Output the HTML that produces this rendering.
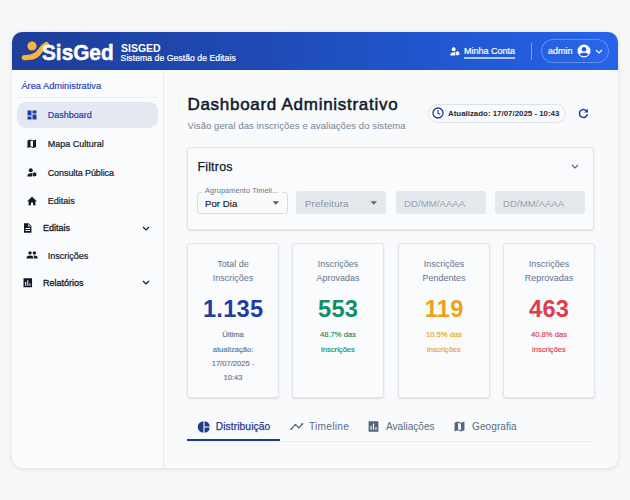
<!DOCTYPE html>
<html lang="pt-BR">
<head>
<meta charset="utf-8">
<title>SISGED - Dashboard Administrativo</title>
<style>
*{box-sizing:border-box;margin:0;padding:0}
html,body{width:630px;height:500px;overflow:hidden}
body{background:#f7f7f7;font-family:"Liberation Sans","DejaVu Sans",sans-serif;position:relative;color:#111827}
.abs{position:absolute}
#app{position:absolute;left:12px;top:32px;width:606px;height:436px;border-radius:10px;background:#f8fafc;overflow:hidden;box-shadow:0 1px 4px rgba(0,0,0,.10),0 0 1px rgba(0,0,0,.10)}
#hdr{position:absolute;left:0;top:0;width:606px;height:38px;background:linear-gradient(90deg,#1e3e9a 0%,#1f49b3 38%,#2156cf 70%,#2563eb 100%)}
#side{position:absolute;left:0;top:38px;width:152px;height:398px;background:#f9fbfd;border-right:1px solid #e9eef4}
#main{position:absolute;left:152px;top:38px;width:454px;height:398px;background:#f8fafc}
.t{position:absolute;white-space:nowrap;line-height:1}
.nav{font-size:9px;color:#111827;-webkit-text-stroke:.2px #111827}
svg{position:absolute;overflow:visible}
.card{position:absolute;background:#fafbfd;border:1px solid #e1e5ea;border-radius:3px;box-shadow:0 1px 2px rgba(0,0,0,.12)}
.lbl{font-size:9px;color:#64748b;text-align:center;line-height:14px;white-space:normal}
.num{font-size:23.6px;font-weight:bold;text-align:center;letter-spacing:.3px;text-indent:.3px}
.sub{font-size:7.6px;text-align:center;line-height:14.2px;white-space:normal;-webkit-text-stroke:.15px currentColor}
</style>
</head>
<body>
<div id="app">
  <div id="hdr"></div>
  <div id="side"></div>
  <div id="main"></div>
</div>

<!-- HEADER (page coords) -->
<svg style="left:20px;top:40px" width="30" height="22" viewBox="0 0 30 22">
  <circle cx="12" cy="6" r="4.6" fill="#f6b63c"/>
  <path d="M4.4 17.6 C9 17.6 13 17.8 17 14.4 C20.5 11.4 22 6.8 26.4 4.6" fill="none" stroke="#f6b63c" stroke-width="5.4" stroke-linecap="round"/>
</svg>
<div class="t" style="left:42px;top:42.3px;font-size:22.6px;font-weight:bold;color:#fff;-webkit-text-stroke:.5px #fff;transform:scaleX(.92);transform-origin:0 0">SisGed</div>
<div class="t" style="left:120.6px;top:41.8px;font-size:11.6px;font-weight:bold;color:#fff;transform:scaleX(.905);transform-origin:0 0">SISGED</div>
<div class="t" style="left:120.6px;top:54.3px;font-size:8.6px;letter-spacing:.07px;color:#fff;-webkit-text-stroke:.2px #fff">Sistema de Gestão de Editais</div>

<svg style="left:450.4px;top:46.8px" width="11" height="10" viewBox="0 0 11 10">
  <circle cx="3.7" cy="2.3" r="1.95" fill="#fff"/>
  <path d="M0.3 8.4 C0.3 6.1 2 5.3 3.7 5.3 C4.4 5.3 5 5.4 5.5 5.6 C4.9 6.4 4.8 7.5 5.2 8.4 Z" fill="#fff"/>
  <circle cx="7.5" cy="6.3" r="1.3" fill="none" stroke="#fff" stroke-width="1.2"/><path d="M7.5 4.1 L7.5 8.5 M5.6 5.2 L9.4 7.4 M5.6 7.4 L9.4 5.2" stroke="#fff" stroke-width=".7" fill="none"/>
</svg>
<div class="t" style="left:464px;top:46.5px;font-size:9px;color:#fff;-webkit-text-stroke:.2px #fff;border-bottom:2px solid rgba(255,255,255,.66);padding-bottom:1.1px">Minha Conta</div>
<div class="abs" style="left:530.5px;top:43px;width:1px;height:16.5px;background:rgba(255,255,255,.4)"></div>
<div class="abs" style="left:541px;top:39px;width:68px;height:24px;border:1px solid rgba(255,255,255,.28);border-radius:12px;background:rgba(255,255,255,.02)"></div>
<div class="t" style="left:548px;top:46.5px;font-size:9px;color:#fff;-webkit-text-stroke:.2px #fff">admin</div>
<svg style="left:577px;top:44px" width="14" height="14" viewBox="0 0 14 14">
  <circle cx="7" cy="7" r="6.5" fill="#fff"/>
  <circle cx="7" cy="5.2" r="2.25" fill="#2259da"/>
  <path d="M2.6 10.7 C3.6 8.2 10.4 8.2 11.4 10.7 C10 12.6 4 12.6 2.6 10.7Z" fill="#2259da"/>
</svg>
<svg style="left:595px;top:49px" width="8" height="5" viewBox="0 0 8 5"><path d="M1 1 L4 4 L7 1" fill="none" stroke="#fff" stroke-width="1.1"/></svg>

<!-- SIDEBAR -->
<div class="t" style="left:21.4px;top:82px;font-size:9.25px;color:#1e40af;-webkit-text-stroke:.15px #1e40af">Área Administrativa</div>
<div class="abs" style="left:17px;top:97px;width:141px;height:1px;background:#edf0f4"></div>
<div class="abs" style="left:17px;top:102px;width:141px;height:26px;border-radius:9px;background:#e3e8f1"></div>
<svg style="left:27px;top:110px" width="10" height="10" viewBox="0 0 10 10" fill="#1e40af">
  <rect x="0.5" y="0.5" width="4" height="5"/><rect x="5.5" y="0.5" width="4" height="3"/><rect x="0.5" y="6.5" width="4" height="3"/><rect x="5.5" y="4.5" width="4" height="5"/>
</svg>
<div class="t nav" style="left:47.7px;top:111px;color:#1e40af;-webkit-text-stroke:.2px #1e40af">Dashboard</div>

<svg style="left:27px;top:139px" width="9.5" height="9.5" viewBox="0 0 10 10" fill="#111827">
  <path d="M0.5 1.5 L3.5 0.5 L6.5 1.5 L9.5 0.5 L9.5 8.5 L6.5 9.5 L3.5 8.5 L0.5 9.5 Z M3.7 1.6 L3.7 7.6 L6.3 8.4 L6.3 2.4 Z" fill-rule="evenodd"/>
</svg>
<div class="t nav" style="left:47.7px;top:139.6px">Mapa Cultural</div>

<svg style="left:27px;top:167.5px" width="11" height="10" viewBox="0 0 11 10" fill="#111827">
  <circle cx="3.8" cy="2.3" r="1.95"/><path d="M0.3 8.4 C0.3 6.1 2 5.3 3.8 5.3 C4.5 5.3 5.1 5.4 5.6 5.6 C5 6.4 4.9 7.5 5.3 8.4 Z"/><circle cx="7.5" cy="6.3" r="1.3" fill="none" stroke="#111827" stroke-width="1.2"/><path d="M7.5 4.1 L7.5 8.5 M5.6 5.2 L9.4 7.4 M5.6 7.4 L9.4 5.2" stroke="#111827" stroke-width=".7" fill="none"/>
</svg>
<div class="t nav" style="left:47.7px;top:168.8px;letter-spacing:-.08px">Consulta Pública</div>

<svg style="left:27px;top:195.6px" width="10" height="10" viewBox="0 0 10 10" fill="#111827">
  <path d="M5 0.8 L0.2 5.2 L1.6 5.2 L1.6 9.2 L4 9.2 L4 6.4 L6 6.4 L6 9.2 L8.4 9.2 L8.4 5.2 L9.8 5.2 Z"/>
</svg>
<div class="t nav" style="left:47.7px;top:197px">Editais</div>

<svg style="left:23px;top:223px" width="9" height="10" viewBox="0 0 9 10" fill="#111827">
  <path d="M1 0.3 L5.6 0.3 L8.4 3.1 L8.4 9.7 L1 9.7 Z M2.4 5 L7 5 L7 5.9 L2.4 5.9Z M2.4 7 L7 7 L7 7.9 L2.4 7.9Z M5.2 1 L5.2 3.5 L7.7 3.5Z" fill-rule="evenodd"/>
</svg>
<div class="t nav" style="left:43px;top:223.5px;-webkit-text-stroke:.3px #111827">Editais</div>
<svg style="left:142px;top:226px" width="8" height="5" viewBox="0 0 8 5"><path d="M1 1 L4 4 L7 1" fill="none" stroke="#111827" stroke-width="1.2"/></svg>

<svg style="left:26px;top:251px" width="12" height="8" viewBox="0 0 12 8" fill="#111827">
  <circle cx="4" cy="1.9" r="1.7"/><circle cx="8.4" cy="1.9" r="1.7"/>
  <path d="M0.4 7.4 C0.4 5 2.4 4.4 4 4.4 C5.6 4.4 7.6 5 7.6 7.4Z"/><path d="M8.2 7.4 C8.2 6 7.8 5.2 7.2 4.6 C7.6 4.5 8 4.4 8.4 4.4 C10 4.4 11.8 5 11.8 7.4Z"/>
</svg>
<div class="t nav" style="left:47.7px;top:251.8px">Inscrições</div>

<svg style="left:22.8px;top:277.6px" width="9.6" height="9.6" viewBox="0 0 9 9" fill="#111827">
  <path d="M0.5 0.3 L8.5 0.3 L8.5 8.7 L0.5 8.7 Z M2 3.8 L3 3.8 L3 7.2 L2 7.2Z M4 2 L5 2 L5 7.2 L4 7.2Z M6 5.2 L7 5.2 L7 7.2 L6 7.2Z" fill-rule="evenodd"/>
</svg>
<div class="t nav" style="left:43px;top:278.5px;-webkit-text-stroke:.3px #111827">Relatórios</div>
<svg style="left:142px;top:280px" width="8" height="5" viewBox="0 0 8 5"><path d="M1 1 L4 4 L7 1" fill="none" stroke="#111827" stroke-width="1.2"/></svg>

<!-- MAIN -->
<div class="t" style="left:187.4px;top:96px;font-size:17px;letter-spacing:.72px;color:#111827;-webkit-text-stroke:.5px #111827">Dashboard Administrativo</div>
<div class="t" style="left:187.4px;top:121px;font-size:9.5px;letter-spacing:.08px;color:#758296">Visão geral das inscrições e avaliações do sistema</div>

<div class="abs" style="left:428px;top:104px;width:138px;height:19px;border:1px solid #dde1e7;border-radius:10px;background:#f8fafc"></div>
<svg style="left:432.1px;top:107.2px" width="12" height="12" viewBox="0 0 12 12"><circle cx="6" cy="6" r="5" fill="none" stroke="#1e3a8a" stroke-width="1.3"/><path d="M6 3 L6 6.2 L8.3 7.6" fill="none" stroke="#1e3a8a" stroke-width="1.1"/></svg>
<div class="t" style="left:448px;top:110.3px;font-size:7.9px;font-weight:bold;color:#1f2937">Atualizado: 17/07/2025 - 10:43</div>
<svg style="left:577.7px;top:107.8px" width="10.8" height="10.8" viewBox="0 0 10 10"><path d="M8.2 3.2 A3.7 3.7 0 1 0 8.7 5.6" fill="none" stroke="#1e40af" stroke-width="1.4"/><path d="M9.2 0.6 L9.2 4.1 L5.7 4.1 Z" fill="#1e40af"/></svg>

<!-- Filter card -->
<div class="card" style="left:187px;top:147px;width:407px;height:83px"></div>
<div class="t" style="left:197.4px;top:161px;font-size:12.4px;letter-spacing:.22px;color:#111827;-webkit-text-stroke:.25px #111827">Filtros</div>
<svg style="left:571px;top:164.3px" width="8" height="5" viewBox="0 0 8 5"><path d="M1 1 L4 4 L7 1" fill="none" stroke="#5b6472" stroke-width="1.1"/></svg>

<div class="abs" style="left:197px;top:191.5px;width:90.5px;height:22.5px;border:1px solid #d9dde3;border-radius:3px;background:#f8fafc"></div>
<div class="t" style="left:202px;top:187.3px;font-size:7.3px;letter-spacing:.12px;color:#5f7691;background:#f8fafc;padding:0 3px">Agrupamento Timeli...</div>
<div class="t" style="left:205px;top:198.6px;font-size:9.6px;letter-spacing:.05px;color:#111827;-webkit-text-stroke:.15px #111827">Por Dia</div>
<svg style="left:271.5px;top:201px" width="7.6" height="4.3" viewBox="0 0 7 4"><path d="M0.5 0.3 L6.5 0.3 L3.5 3.6Z" fill="#555d69"/></svg>

<div class="abs" style="left:296px;top:191px;width:90px;height:23px;border-radius:3px;background:#e5e8ec"></div>
<div class="t" style="left:305px;top:198.6px;font-size:9.6px;letter-spacing:.2px;color:#8b95a3">Prefeitura</div>
<svg style="left:370.3px;top:201px" width="7.6" height="4.3" viewBox="0 0 7 4"><path d="M0.5 0.3 L6.5 0.3 L3.5 3.6Z" fill="#5b6470"/></svg>

<div class="abs" style="left:396px;top:191px;width:90px;height:23px;border-radius:3px;background:#e5e8ec"></div>
<div class="t" style="left:404px;top:198.6px;font-size:9.6px;letter-spacing:.05px;color:#9aa3af">DD/MM/AAAA</div>
<div class="abs" style="left:495px;top:191px;width:90px;height:23px;border-radius:3px;background:#e5e8ec"></div>
<div class="t" style="left:503px;top:198.6px;font-size:9.6px;letter-spacing:.05px;color:#9aa3af">DD/MM/AAAA</div>

<!-- Stat cards -->
<div class="card" style="left:187px;top:243px;width:92px;height:155px"></div>
<div class="card" style="left:292px;top:243px;width:92px;height:155px"></div>
<div class="card" style="left:398px;top:243px;width:92px;height:155px"></div>
<div class="card" style="left:503px;top:243px;width:92px;height:155px"></div>

<div class="t lbl" style="left:187px;top:257px;width:92px">Total de<br>Inscrições</div>
<div class="t num" style="left:187px;top:297.8px;width:92px;color:#1e3ea6">1.135</div>
<div class="t sub" style="left:187px;top:328.4px;width:92px;color:#64748b">Última<br>atualização:<br>17/07/2025 -<br>10:43</div>

<div class="t lbl" style="left:292px;top:257px;width:92px">Inscrições<br>Aprovadas</div>
<div class="t num" style="left:292px;top:297.8px;width:92px;color:#0f8f6a">553</div>
<div class="t sub" style="left:292px;top:328.4px;width:92px;color:#0f8f6a">48.7% das<br>inscrições</div>

<div class="t lbl" style="left:398px;top:257px;width:92px">Inscrições<br>Pendentes</div>
<div class="t num" style="left:398px;top:297.8px;width:92px;color:#f0a020">119</div>
<div class="t sub" style="left:398px;top:328.4px;width:92px;color:#f0a020">10.5% das<br>inscrições</div>

<div class="t lbl" style="left:503px;top:257px;width:92px">Inscrições<br>Reprovadas</div>
<div class="t num" style="left:503px;top:297.8px;width:92px;color:#e23a4e">463</div>
<div class="t sub" style="left:503px;top:328.4px;width:92px;color:#e23a4e">40.8% das<br>inscrições</div>

<!-- Tabs -->
<div class="abs" style="left:187px;top:440.5px;width:408px;height:1px;background:#ebeef3"></div>
<div class="abs" style="left:187px;top:438.7px;width:93px;height:2px;background:#1e3a8a"></div>
<svg style="left:197.8px;top:420.6px" width="12" height="12" viewBox="0 0 11 11" fill="#1e3a8a">
  <path d="M5 0.3 A5.2 5.2 0 1 0 5 10.7 Z"/><path d="M6 0.3 A5.2 5.2 0 0 1 10.7 5 L6 5Z"/><path d="M6 6 L10.7 6 A5.2 5.2 0 0 1 6 10.7Z"/>
</svg>
<div class="t" style="left:215.8px;top:421.9px;font-size:10.2px;letter-spacing:.1px;color:#1e3a8a;-webkit-text-stroke:.25px #1e3a8a">Distribuição</div>
<svg style="left:290px;top:422px" width="13" height="9" viewBox="0 0 13 9"><path d="M1.2 7.1 L5.5 2.4 L8.7 5.9 L12.4 2" fill="none" stroke="#54647d" stroke-width="1.3" stroke-linecap="round" stroke-linejoin="round"/><circle cx="1.2" cy="7.1" r=".9" fill="#54647d"/><circle cx="12.4" cy="2" r=".9" fill="#54647d"/></svg>
<div class="t" style="left:309px;top:421.6px;font-size:10.2px;letter-spacing:.25px;color:#5b6a82">Timeline</div>
<svg style="left:368px;top:421px" width="11" height="11" viewBox="0 0 9 9" fill="#54647d">
  <path d="M0.5 0.3 L8.5 0.3 L8.5 8.7 L0.5 8.7 Z M2 3.8 L3 3.8 L3 7.2 L2 7.2Z M4 2 L5 2 L5 7.2 L4 7.2Z M6 5.2 L7 5.2 L7 7.2 L6 7.2Z" fill-rule="evenodd"/>
</svg>
<div class="t" style="left:386px;top:421.6px;font-size:10.1px;color:#5b6a82">Avaliações</div>
<svg style="left:454px;top:421px" width="11" height="11" viewBox="0 0 10 10" fill="#54647d">
  <path d="M0.5 1.5 L3.5 0.5 L6.5 1.5 L9.5 0.5 L9.5 8.5 L6.5 9.5 L3.5 8.5 L0.5 9.5 Z M3.7 1.6 L3.7 7.6 L6.3 8.4 L6.3 2.4 Z" fill-rule="evenodd"/>
</svg>
<div class="t" style="left:472px;top:421.6px;font-size:10.1px;letter-spacing:.05px;color:#5b6a82">Geografia</div>
</body>
</html>
